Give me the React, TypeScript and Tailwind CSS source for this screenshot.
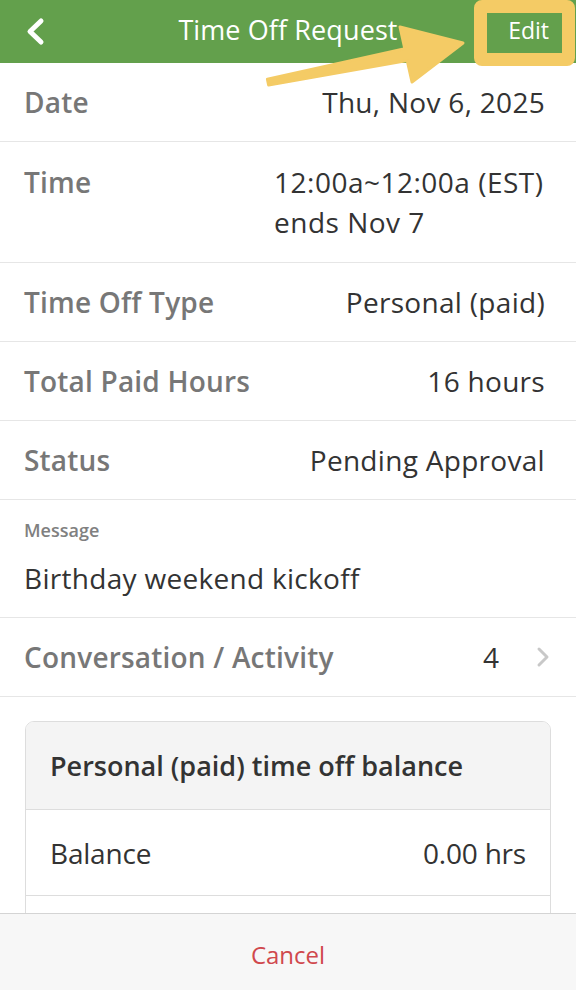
import React from "react";

const font = { fontFamily: "'Open Sans', 'Noto Sans', sans-serif" };

function Row({ label, value }: { label: string; value: React.ReactNode }) {
  return (
    <div className="flex items-center justify-between border-b border-[#e6e6e6] pl-[24px] pr-[31px] h-[79px]">
      <span className="text-[28px] font-semibold text-[#777777] leading-[40px] tracking-[0.2px]">{label}</span>
      <span className="text-[28px] text-[#333333] leading-[40px] tracking-[0.3px]">{value}</span>
    </div>
  );
}

export default function App() {
  return (
    <div className="relative h-[990px] w-[576px] overflow-hidden bg-white flex flex-col" style={font}>
      {/* Header */}
      <header className="h-[63px] bg-[#63a04c] grid grid-cols-[100px_1fr_100px] items-center shrink-0">
        <div className="pl-[24px] flex items-center">
          <svg width="24" height="32" viewBox="0 0 24 32">
            <path d="M17 5 L6 15.5 L17 26" fill="none" stroke="#ffffff" strokeWidth="5" strokeLinecap="round" strokeLinejoin="round" />
          </svg>
        </div>
        <div className="text-center text-white text-[27px] leading-[40px] -mt-[3px] tracking-[0.1px]">Time Off Request</div>
        <div className="flex justify-end pr-[27px] text-white text-[23px] leading-[32px] -mt-[3px]">Edit</div>
      </header>

      {/* Content */}
      <main className="flex-1 overflow-hidden">
        <Row label="Date" value="Thu, Nov 6, 2025" />
        <div className="flex justify-between border-b border-[#e6e6e6] pl-[24px] pr-[31px] pt-[20px] pb-[20px]">
          <span className="text-[28px] font-semibold text-[#777777] leading-[40px] tracking-[0.2px]">Time</span>
          <div className="text-[28px] text-[#333333] leading-[40px] w-[271px] tracking-[0.5px]">
            <div className="whitespace-nowrap">12:00a~12:00a (EST)</div>
            <div>ends Nov 7</div>
          </div>
        </div>
        <Row label="Time Off Type" value="Personal (paid)" />
        <Row label="Total Paid Hours" value="16 hours" />
        <Row label="Status" value="Pending Approval" />
        <div className="border-b border-[#e6e6e6] px-[24px] pt-[18px] pb-[19px] flex flex-col gap-[16px]">
          <span className="text-[18px] font-semibold text-[#808080] leading-[24px]">Message</span>
          <span className="text-[28px] text-[#333333] leading-[40px] tracking-[0.3px]">Birthday weekend kickoff</span>
        </div>
        <div className="flex items-center justify-between border-b border-[#e6e6e6] pl-[24px] pr-[25px] h-[79px]">
          <span className="text-[28px] font-semibold text-[#777777] leading-[40px] tracking-[0.2px]">Conversation / Activity</span>
          <div className="flex items-center gap-[36px]">
            <span className="text-[28px] text-[#333333] leading-[40px]">4</span>
            <svg width="16" height="22" viewBox="0 0 16 22">
              <path d="M4 3 L12 11 L4 19" fill="none" stroke="#c8c8c8" strokeWidth="3" strokeLinecap="round" strokeLinejoin="round" />
            </svg>
          </div>
        </div>

        <div className="mx-[25px] mt-[24px] border border-[#dddddd] rounded-[9px] overflow-hidden">
          <div className="bg-[#f4f4f4] h-[88px] flex items-center px-[24px] border-b border-[#dddddd]">
            <span className="text-[27px] font-semibold text-[#333333] leading-[40px]">Personal (paid) time off balance</span>
          </div>
          <div className="h-[86px] flex items-center justify-between px-[24px] border-b border-[#dddddd]">
            <span className="text-[28px] text-[#333333] leading-[40px] tracking-[-0.2px]">Balance</span>
            <span className="text-[28px] text-[#333333] leading-[40px] tracking-[-0.2px]">0.00 hrs</span>
          </div>
          <div className="h-[86px]" />
        </div>
      </main>

      {/* Footer */}
      <footer className="h-[77px] shrink-0 border-t border-[#d4d4d4] bg-[#f7f7f7] flex items-center justify-center">
        <span className="text-[24px] text-[#d0484d] leading-[32px] mt-[6px]">Cancel</span>
      </footer>

      {/* Annotation: highlight box */}
      <div className="absolute left-[474px] top-[0px] w-[101px] h-[66px] rounded-[8px] border-[13px] border-[#f4cb65] pointer-events-none" />
      {/* Annotation: arrow */}
      <svg className="absolute left-0 top-0 pointer-events-none" width="576" height="100" viewBox="0 0 576 100">
        <polygon
          points="267.4,79.1 404.8,48.6 400,27 463,43 412,82 407.2,60.4 268.6,84.9"
          fill="#f4cb65"
          stroke="#f4cb65"
          strokeWidth="3"
          strokeLinejoin="round"
        />
      </svg>
    </div>
  );
}
